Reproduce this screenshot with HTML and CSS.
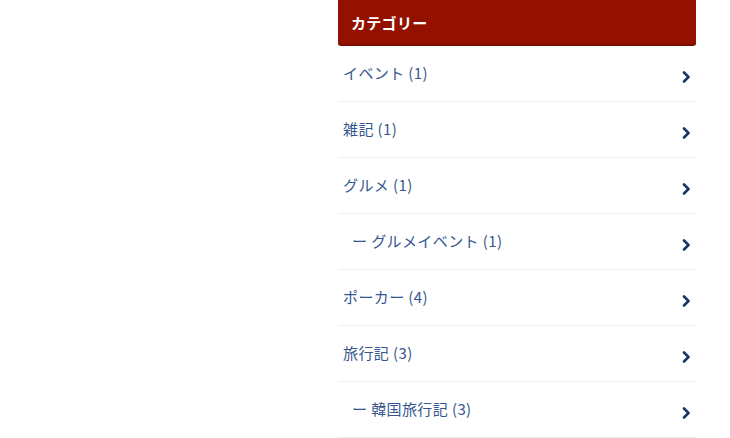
FILE: index.html
```html
<!DOCTYPE html>
<html lang="ja">
<head>
<meta charset="utf-8">
<link rel="stylesheet" href="styles.css">
</head>
<body>
<div class="page">
  <aside class="widget">
    <h2 class="widget-title">カテゴリー</h2>
    <ul class="cat-list">
      <li class="cat-item"><a href="#"><span class="label">イベント (1)</span><svg class="chev" viewBox="0 0 8 12"><path d="M1.5 1.5 L6 6 L1.5 10.5" /></svg></a></li>
      <li class="cat-item"><a href="#"><span class="label">雑記 (1)</span><svg class="chev" viewBox="0 0 8 12"><path d="M1.5 1.5 L6 6 L1.5 10.5" /></svg></a></li>
      <li class="cat-item"><a href="#"><span class="label">グルメ (1)</span><svg class="chev" viewBox="0 0 8 12"><path d="M1.5 1.5 L6 6 L1.5 10.5" /></svg></a></li>
      <li class="cat-item sub"><a href="#"><span class="label">ー グルメイベント (1)</span><svg class="chev" viewBox="0 0 8 12"><path d="M1.5 1.5 L6 6 L1.5 10.5" /></svg></a></li>
      <li class="cat-item"><a href="#"><span class="label">ポーカー (4)</span><svg class="chev" viewBox="0 0 8 12"><path d="M1.5 1.5 L6 6 L1.5 10.5" /></svg></a></li>
      <li class="cat-item"><a href="#"><span class="label">旅行記 (3)</span><svg class="chev" viewBox="0 0 8 12"><path d="M1.5 1.5 L6 6 L1.5 10.5" /></svg></a></li>
      <li class="cat-item sub"><a href="#"><span class="label">ー 韓国旅行記 (3)</span><svg class="chev" viewBox="0 0 8 12"><path d="M1.5 1.5 L6 6 L1.5 10.5" /></svg></a></li>
    </ul>
  </aside>
</div>
</body>
</html>
```
FILE: styles.css
```css
html, body {
  margin: 0;
  padding: 0;
  background: #ffffff;
}
body {
  font-family: "Noto Sans CJK JP", "Noto Sans", sans-serif;
}
.page {
  display: flex;
  padding-left: 338px;
}
.widget {
  width: 358px;
}
.widget-title {
  margin: 0;
  height: 44px;
  display: flex;
  align-items: center;
  padding: 0 0 0 13px;
  background: #941100;
  border-bottom: 2px solid #7a0e00;
  border-radius: 0 0 3px 3px;
  color: #ffffff;
  font-size: 15px;
  font-weight: 700;
  letter-spacing: 0.3px;
}
.cat-list {
  list-style: none;
  margin: 0;
  padding: 0;
}
.cat-item {
  border-bottom: 1px solid #efefef;
}
.cat-item a {
  display: flex;
  align-items: center;
  justify-content: space-between;
  height: 55px;
  padding: 0 5px 0 5px;
  color: #36578e;
  text-decoration: none;
  font-size: 15px;
}
.cat-item.sub a {
  padding-left: 14px;
}
.label {
  letter-spacing: 0.4px;
  margin-top: -3px;
}
.chev {
  width: 9px;
  height: 12px;
  margin-top: 7px;
  fill: none;
  stroke: #1d3668;
  stroke-width: 2.6;
  stroke-linecap: round;
  stroke-linejoin: round;
}
```
